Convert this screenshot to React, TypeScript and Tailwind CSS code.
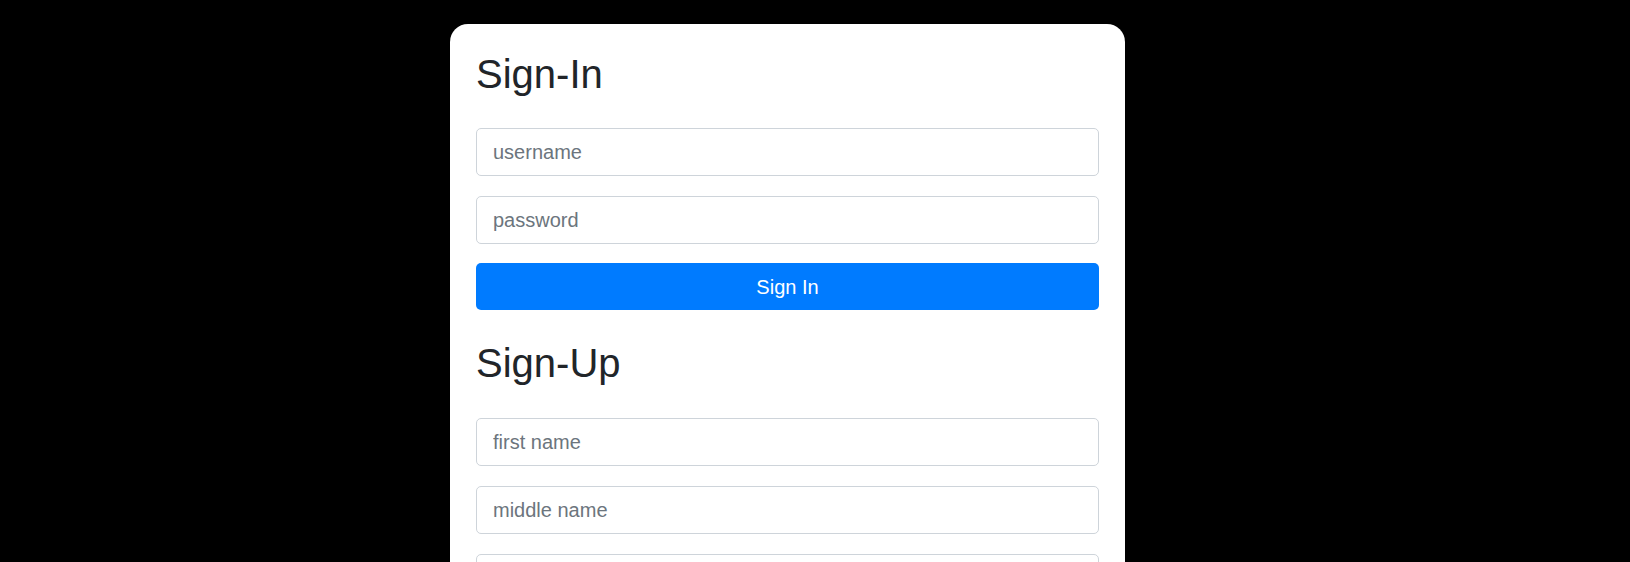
import React from 'react';

const Field = ({ placeholder, type = 'text' }: { placeholder: string; type?: string }) => (
  <input
    type={type}
    placeholder={placeholder}
    className="block w-full h-[48px] px-4 text-[20px] leading-[1.5] text-[#495057] placeholder:text-[#6c757d] bg-white border border-[#ced4da] rounded-[5px] outline-none"
  />
);

export default function App() {
  return (
    <div className="min-h-[562px] bg-black pt-[24px] pl-[450px] font-['Liberation_Sans',Arial,sans-serif]">
      <div className="w-[675px] bg-white rounded-[18px] px-[26px] pt-[26px] pb-[26px]">
        <h1 className="text-[40px] leading-[1.2] font-normal text-[#212529] mb-[30px]">Sign-In</h1>
        <div className="flex flex-col gap-[20px]">
          <Field placeholder="username" />
          <Field placeholder="password" type="password" />
        </div>
        <button className="mt-[19px] w-full h-[47px] bg-[#007bff] text-white text-[20px] leading-[1.5] rounded-[5px]">Sign In</button>

        <h1 className="text-[40px] leading-[1.2] font-normal text-[#212529] mt-[29px] mb-[31px]">Sign-Up</h1>
        <div className="flex flex-col gap-[20px]">
          <Field placeholder="first name" />
          <Field placeholder="middle name" />
          <Field placeholder="last name" />
          <Field placeholder="email" />
          <Field placeholder="password" type="password" />
        </div>
      </div>
    </div>
  );
}
